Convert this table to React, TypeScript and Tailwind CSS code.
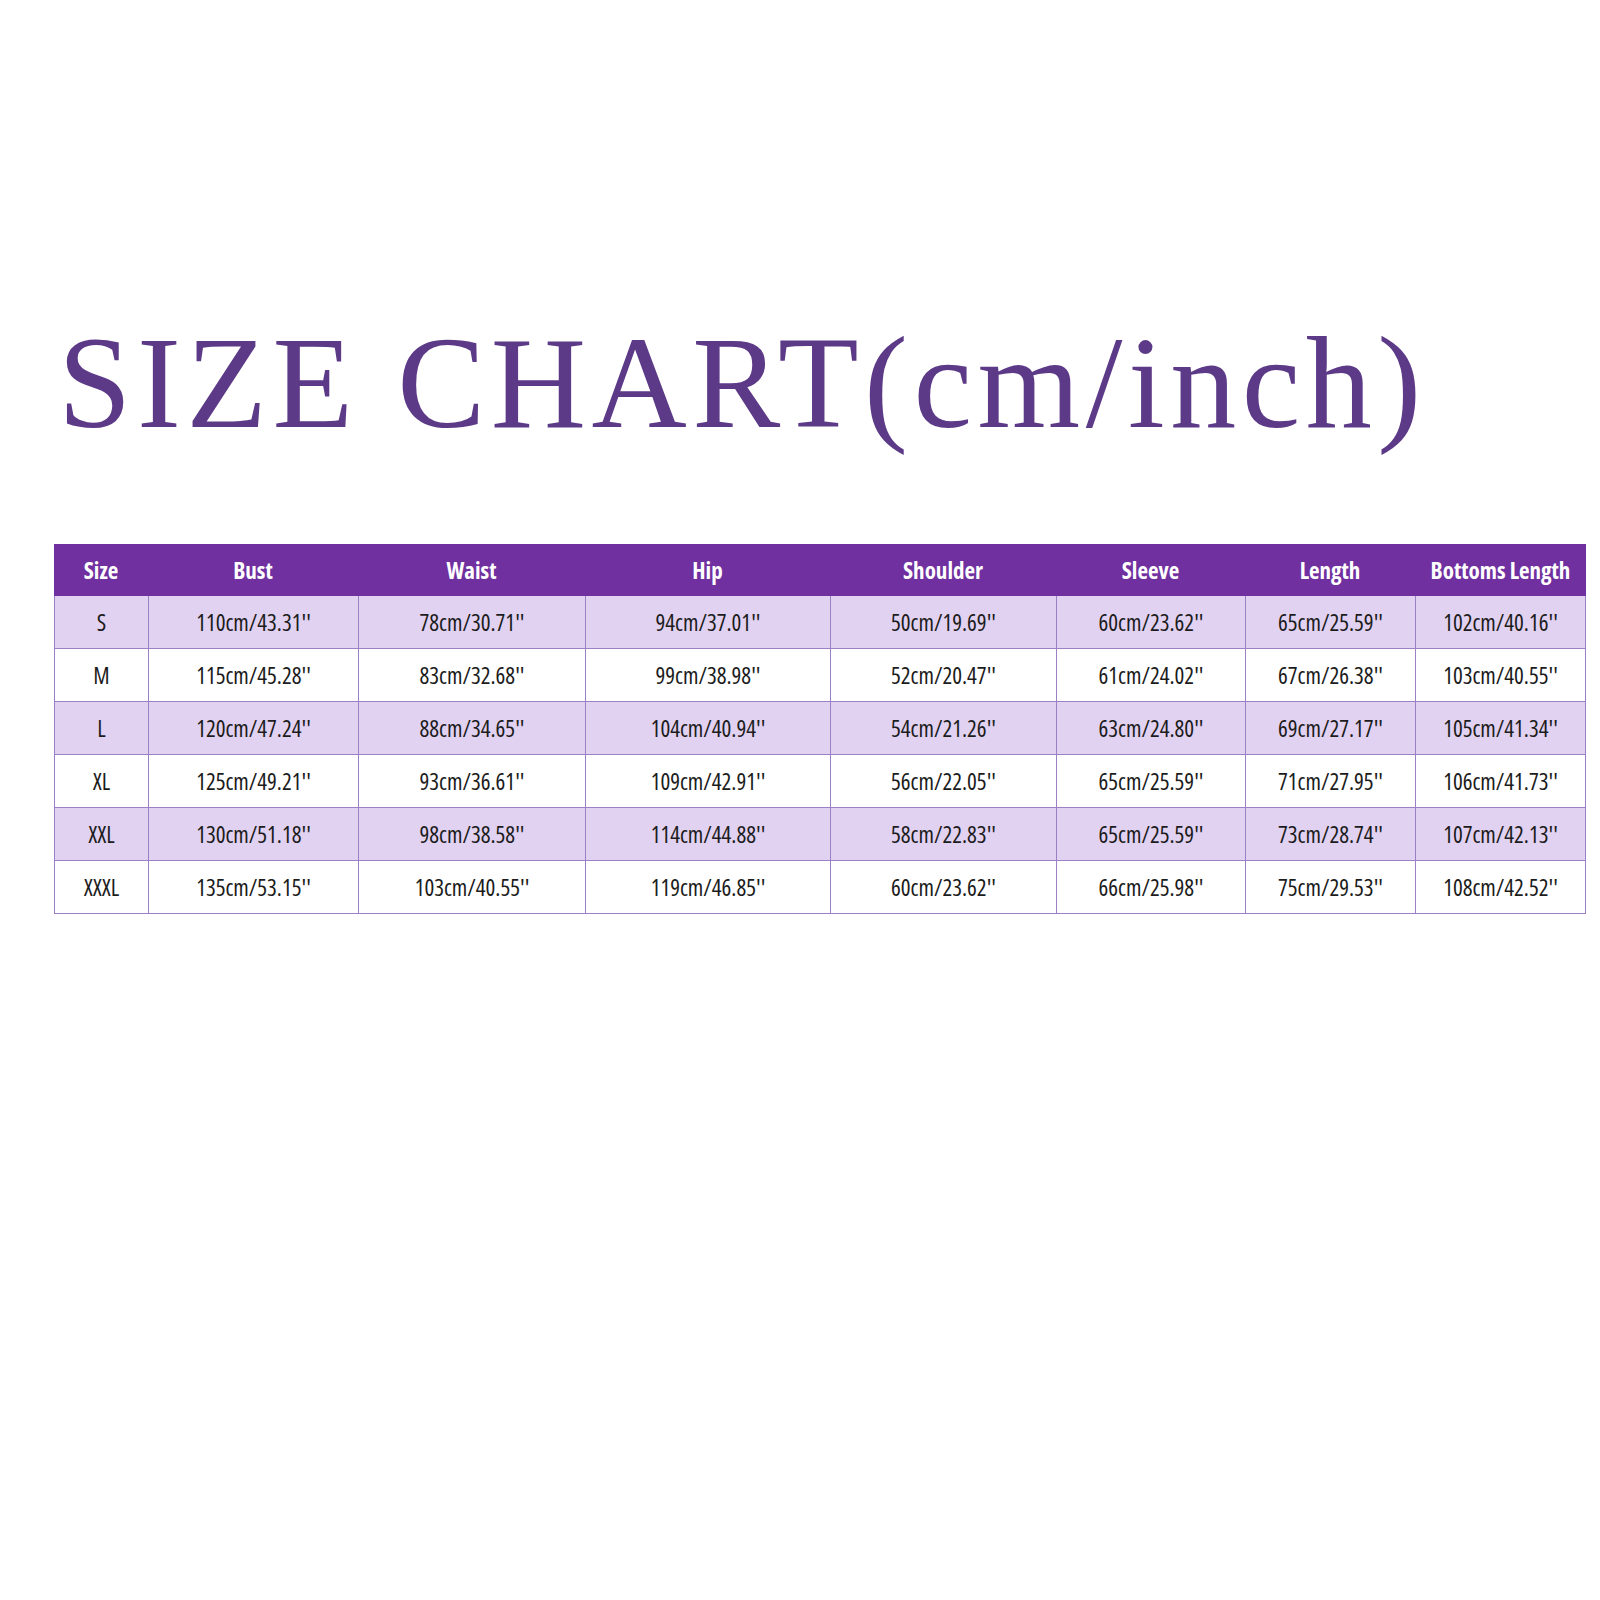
import React from 'react';

// column widths measured off the chart
const cols = [94, 210, 227, 245, 226, 189, 170, 171];

const headers = ['Size', 'Bust', 'Waist', 'Hip', 'Shoulder', 'Sleeve', 'Length', 'Bottoms Length'];

const rows: string[][] = [
  ['S', "110cm/43.31''", "78cm/30.71''", "94cm/37.01''", "50cm/19.69''", "60cm/23.62''", "65cm/25.59''", "102cm/40.16''"],
  ['M', "115cm/45.28''", "83cm/32.68''", "99cm/38.98''", "52cm/20.47''", "61cm/24.02''", "67cm/26.38''", "103cm/40.55''"],
  ['L', "120cm/47.24''", "88cm/34.65''", "104cm/40.94''", "54cm/21.26''", "63cm/24.80''", "69cm/27.17''", "105cm/41.34''"],
  ['XL', "125cm/49.21''", "93cm/36.61''", "109cm/42.91''", "56cm/22.05''", "65cm/25.59''", "71cm/27.95''", "106cm/41.73''"],
  ['XXL', "130cm/51.18''", "98cm/38.58''", "114cm/44.88''", "58cm/22.83''", "65cm/25.59''", "73cm/28.74''", "107cm/42.13''"],
  ['XXXL', "135cm/53.15''", "103cm/40.55''", "119cm/46.85''", "60cm/23.62''", "66cm/25.98''", "75cm/29.53''", "108cm/42.52''"],
];

const tableFont = { fontFamily: '"Open Sans", "Liberation Sans", sans-serif', fontStretch: '75%' };

const SizeTable: React.FC = () => (
  <div className="w-[1532px] ml-[54px]" style={tableFont}>
    <div className="flex h-[52px] bg-[#7030a0] text-white font-bold text-[23px] whitespace-nowrap">
      {headers.map((h, i) => (
        <div key={h} className="flex items-center justify-center" style={{ width: cols[i] }}>
          {h}
        </div>
      ))}
    </div>
    <div className="border-l border-r border-[#9b80c6]">
      {rows.map((row, r) => (
        <div
          key={row[0]}
          className={`flex h-[53px] border-b border-[#9b80c6] text-[23px] text-[#1c1c1c] whitespace-nowrap ${r % 2 === 0 ? 'bg-[#e2d2f2]' : 'bg-white'}`}
        >
          {row.map((cell, i) => (
            <div
              key={i}
              className={`flex items-center justify-center ${i > 0 ? 'border-l border-[#9b80c6]' : ''}`}
              style={{ width: i === 0 ? cols[i] - 1 : cols[i] - (i === cols.length - 1 ? 1 : 0) }}
            >
              {cell}
            </div>
          ))}
        </div>
      ))}
    </div>
  </div>
);

const App: React.FC = () => {
  return (
    <div className="w-[1600px] h-[1600px] bg-white">
      <div className="pt-[317px]">
        <h1
          className="ml-[58px] text-[132px] leading-none tracking-[5.5px] text-[#5c3a87] whitespace-nowrap"
          style={{ fontFamily: '"Liberation Serif", "DejaVu Serif", serif' }}
        >
          SIZE CHART(cm/inch)
        </h1>
      </div>
      <div className="mt-[95px]">
        <SizeTable />
      </div>
    </div>
  );
};

export default App;
